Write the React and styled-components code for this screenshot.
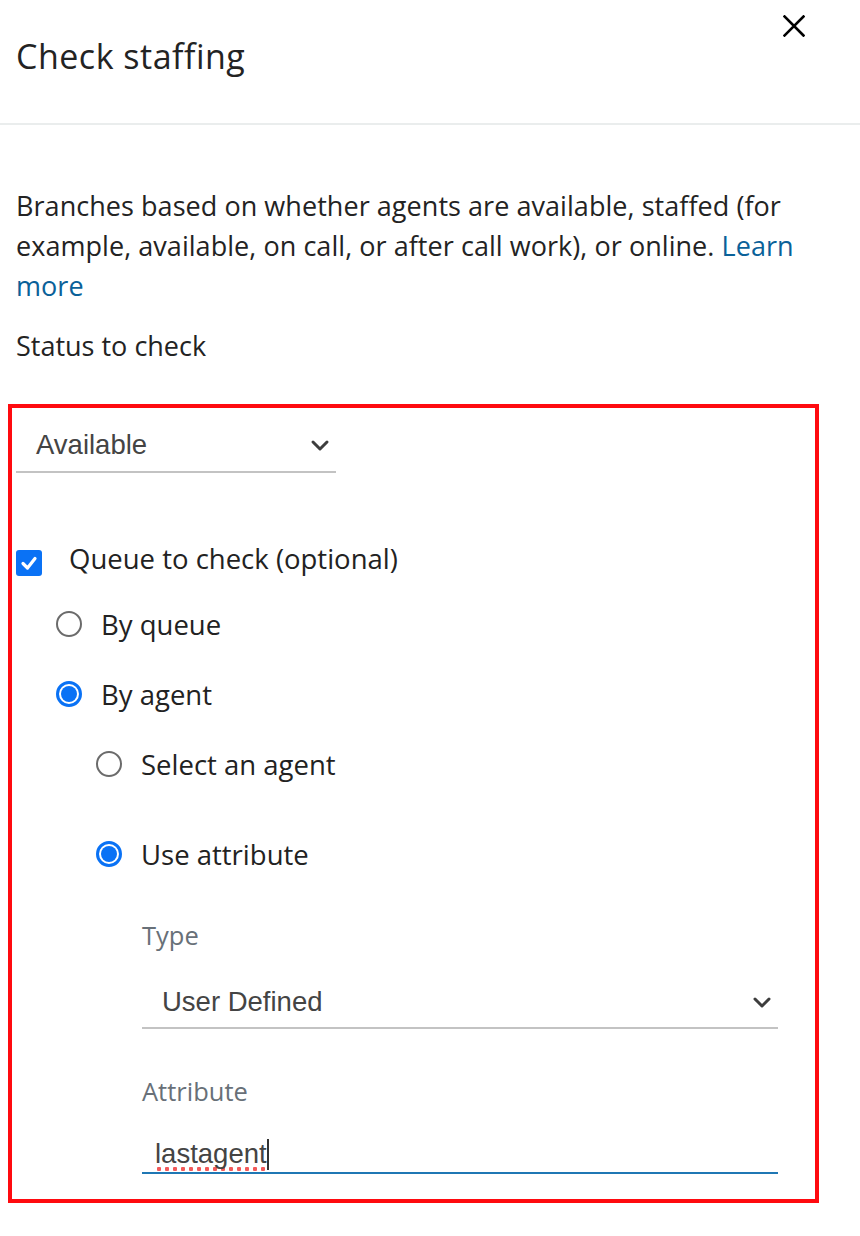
import React from "react";
import styled, { createGlobalStyle } from "styled-components";

const Global = createGlobalStyle`
  html, body { margin: 0; padding: 0; background: #ffffff; }
  body { font-family: "Open Sans", "Noto Sans", sans-serif; color: #16191f; }
`;

const Panel = styled.div`
  width: 860px;
  min-height: 1236px;
  background: #fff;
`;

const Header = styled.header`
  display: flex;
  justify-content: space-between;
  align-items: flex-start;
  height: 125px;
  border-bottom: 2px solid #eaeded;
  box-sizing: border-box;
`;

const Title = styled.h1`
  margin: 36px 0 0 16px;
  font-family: "Open Sans", sans-serif;
  font-weight: 400;
  font-size: 34px;
  line-height: 40px;
  letter-spacing: 0.5px;
  color: #232323;
`;

const CloseButton = styled.button`
  margin: 15px 55px 0 0;
  padding: 0;
  width: 22px;
  height: 22px;
  border: none;
  background: none;
  display: flex;
`;

const Body = styled.div`
  padding: 61px 0 0 0;
`;

const Description = styled.p`
  margin: 0;
  padding: 0 16px;
  font-family: "Open Sans", sans-serif;
  font-size: 27px;
  line-height: 40px;
  letter-spacing: 0.05px;
  color: #232323;
`;

const Link = styled.a`
  color: #0a6199;
  text-decoration: none;
`;

const FieldLabel = styled.div`
  margin: 20px 0 0 16px;
  font-family: "Open Sans", sans-serif;
  font-size: 27px;
  line-height: 40px;
  color: #232323;
`;

const Highlight = styled.section`
  margin: 38px 0 0 8px;
  width: 811px;
  border: 4px solid #ff0a0f;
  box-sizing: border-box;
  padding: 10px 4px 25px 4px;
`;

const Select = styled.div`
  display: flex;
  align-items: center;
  justify-content: space-between;
  width: ${(p) => p.$width}px;
  height: 55px;
  box-sizing: border-box;
  padding: ${(p) => p.$textDrop || 0}px 6px 0 20px;
  border-bottom: 2px solid #c3c3c3;
  font-family: "Liberation Sans", Arial, sans-serif;
  font-size: 27.5px;
  color: #444;
  margin-left: ${(p) => p.$indent || 0}px;
  margin-top: ${(p) => p.$top || 0}px;
`;

const OptionRow = styled.label`
  display: flex;
  align-items: center;
  height: 40px;
  margin-top: ${(p) => p.$top}px;
  margin-left: ${(p) => p.$indent}px;
  font-family: "Open Sans", sans-serif;
  font-size: 27.5px;
  color: #222;
`;

const CheckBox = styled.span`
  width: 26px;
  height: 26px;
  border-radius: 3px;
  background: #0a72f5;
  display: flex;
  align-items: center;
  justify-content: center;
  margin-right: 27px;
  margin-top: 10px;
`;

const Radio = styled.span`
  width: 26px;
  height: 26px;
  box-sizing: border-box;
  border-radius: 50%;
  border: ${(p) => (p.$checked ? "3px solid #0a72f5" : "2px solid #6b6b6b")};
  display: flex;
  align-items: center;
  justify-content: center;
  margin-right: 19px;
  &::after {
    content: "";
    display: ${(p) => (p.$checked ? "block" : "none")};
    width: 16px;
    height: 16px;
    border-radius: 50%;
    background: #0a72f5;
  }
`;

const SubField = styled.div`
  margin-left: 126px;
  width: 636px;
`;

const SubLabel = styled.div`
  margin-top: ${(p) => p.$top}px;
  font-family: "Open Sans", sans-serif;
  font-size: 25.5px;
  line-height: 30px;
  color: #687078;
`;

const Input = styled.div`
  margin-top: 19px;
  height: 49px;
  box-sizing: border-box;
  border-bottom: 2px solid #1f77b4;
  display: flex;
  align-items: flex-end;
  padding: 0 0 0 13px;
  font-family: "Liberation Sans", Arial, sans-serif;
  font-size: 27.5px;
  line-height: 34px;
  color: #444;
`;

const Misspelled = styled.span`
  background-image: radial-gradient(circle, #f25a5a 2px, transparent 2.5px);
  background-size: 8px 6px;
  background-repeat: repeat-x;
  background-position: 0 100%;
  padding-bottom: 1px;
`;

const Caret = styled.span`
  display: inline-block;
  width: 2px;
  height: 31px;
  background: #333;
  margin: 0 0 2px 0;
`;

const Chevron = () => (
  <svg width="20" height="20" viewBox="0 0 20 20" fill="none">
    <polyline points="3,7 10,14 17,7" stroke="#3d3d3d" strokeWidth="3" strokeLinecap="round" strokeLinejoin="round" />
  </svg>
);

export default function App() {
  return (
    <Panel>
      <Global />
      <Header>
        <Title>Check staffing</Title>
        <CloseButton aria-label="Close">
          <svg width="22" height="22" viewBox="0 0 22 22">
            <path d="M1.5 1.5 L20.5 20.5 M20.5 1.5 L1.5 20.5" stroke="#000" strokeWidth="2.6" strokeLinecap="square" />
          </svg>
        </CloseButton>
      </Header>
      <Body>
        <Description>
          Branches based on whether agents are available, staffed (for
          <br />
          example, available, on call, or after call work), or online. <Link href="#">Learn</Link>
          <br />
          <Link href="#">more</Link>
        </Description>
        <FieldLabel>Status to check</FieldLabel>
        <Highlight>
          <Select $width={320}>
            Available
            <Chevron />
          </Select>
          <OptionRow $top={65} $indent={0}>
            <CheckBox>
              <svg width="18" height="18" viewBox="0 0 18 18">
                <polyline points="3,9.5 7.5,14 15,4.5" fill="none" stroke="#fff" strokeWidth="3.2" strokeLinecap="round" strokeLinejoin="round" />
              </svg>
            </CheckBox>
            Queue to check (optional)
          </OptionRow>
          <OptionRow $top={26} $indent={40}>
            <Radio />
            By queue
          </OptionRow>
          <OptionRow $top={30} $indent={40}>
            <Radio $checked />
            By agent
          </OptionRow>
          <OptionRow $top={30} $indent={80}>
            <Radio />
            Select an agent
          </OptionRow>
          <OptionRow $top={50} $indent={80}>
            <Radio $checked />
            Use attribute
          </OptionRow>
          <SubField>
            <SubLabel $top={46}>Type</SubLabel>
            <Select $width={636} $top={24} $textDrop={3}>
              User Defined
              <Chevron />
            </Select>
            <SubLabel $top={47}>Attribute</SubLabel>
            <Input>
              <Misspelled>lastagent</Misspelled>
              <Caret />
            </Input>
          </SubField>
        </Highlight>
      </Body>
    </Panel>
  );
}
